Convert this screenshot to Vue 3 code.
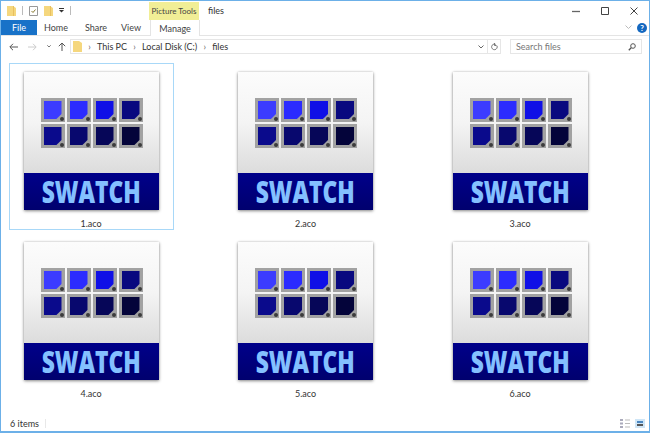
<template>
  <div class="window">
    <header class="title-row">
      <div class="qat">
        <svg class="qat__icon" width="9" height="10" viewBox="0 0 9 10"><path d="M0 0h6l3 2v8H0z" fill="#f5d77e" /><path d="M6.500 0v10" stroke="#e8c060" /></svg>
        <span class="qat__sep"></span>
        <svg class="qat__icon" width="9" height="10" viewBox="0 0 9 10"><path d="M.5.500h8v9h-8z" fill="#fff" stroke="#999" /><path d="M2.500 5l1.500 1.500 2.500-3" fill="none" stroke="#8a7a30" /></svg>
        <svg class="qat__icon" width="9" height="10" viewBox="0 0 9 10"><path d="M0 0h6l3 2v8H0z" fill="#f5d77e" /><path d="M6.500 0v10" stroke="#e8c060" /></svg>
        <svg class="qat__icon" width="5" height="5" viewBox="0 0 5 5"><path d="M0 .5h5" stroke="#333" /><path d="M0 2h5L2.500 4.500z" fill="#333" /></svg>
        <span class="qat__sep"></span>
      </div>
      <div class="context-tab">Picture Tools</div>
      <div class="title">files</div>
      <div class="win-controls">
        <svg width="8" height="8" viewBox="0 0 8 8"><path d="M0 4.500h8" stroke="#666" stroke-width="1.300" /></svg>
        <svg width="8" height="8" viewBox="0 0 8 8"><path d="M.5.500h7v7h-7z" fill="none" stroke="#444" /></svg>
        <svg width="8" height="8" viewBox="0 0 8 8"><path d="M.5.500l7 7M7.500.500l-7 7" stroke="#444" /></svg>
      </div>
    </header>

    <nav class="tabs">
      <span class="tab tab--file">File</span>
      <span class="tab tab--home">Home</span>
      <span class="tab tab--share">Share</span>
      <span class="tab tab--view">View</span>
      <span class="tab tab--manage">Manage</span>
      <svg class="tabs__chevron" width="7" height="5" viewBox="0 0 7 5"><path d="M.5.500l3 3 3-3" fill="none" stroke="#bbb" /></svg>
      <span class="help">?</span>
    </nav>

    <section class="toolbar">
      <div class="nav-buttons">
        <svg width="9" height="8" viewBox="0 0 9 8"><path d="M9 4H1M4 .8L.8 4 4 7.200" fill="none" stroke="#555" /></svg>
        <svg width="9" height="8" viewBox="0 0 9 8"><path d="M0 4h8M5 .8L8.200 4 5 7.200" fill="none" stroke="#ccc" /></svg>
        <svg width="4" height="3" viewBox="0 0 4 3"><path d="M.3.300L2 2l1.700-1.700" fill="none" stroke="#777" /></svg>
        <svg class="nav-up" width="8" height="9" viewBox="0 0 8 9"><path d="M4 9V1M.8 4.200L4 1l3.200 3.200" fill="none" stroke="#555" /></svg>
      </div>
      <div class="address">
        <svg class="address__folder" width="9" height="11" viewBox="0 0 9 11"><path d="M0 0h6l3 2v9H0z" fill="#f5d77e" /></svg>
        <span class="crumb-sep">›</span>
        <span>This PC</span>
        <span class="crumb-sep">›</span>
        <span>Local Disk (C:)</span>
        <span class="crumb-sep">›</span>
        <span>files</span>
        <span class="address__end">
          <svg width="6" height="4" viewBox="0 0 6 4"><path d="M.5.500L3 3 5.500.500" fill="none" stroke="#666" /></svg>
          <span class="address__divider"></span>
          <svg width="7" height="8" viewBox="0 0 7 8"><path d="M6 2.800a2.800 2.800 0 1 1-1.300-1.400M3.500 0v2.500h2" fill="none" stroke="#777" /></svg>
        </span>
      </div>
      <div class="search">
        <span>Search files</span>
        <svg width="8" height="8" viewBox="0 0 8 8"><circle cx="5" cy="3" r="2.300" fill="none" stroke="#555" /><path d="M3.200 4.800L.8 7.200" stroke="#555" stroke-width="1.300" /></svg>
      </div>
    </section>

    <main class="files">
      <article v-for="(file, i) in files" :key="file" class="tile" :class="{ 'tile--focus': i === 0 }">
        <div class="doc">
          <div class="doc__body">
            <div class="swatches">
              <span v-for="c in colors" :key="c" class="swatch">
                <span class="swatch__fill" :style="{ background: c }"></span>
                <span class="swatch__dot"></span>
              </span>
            </div>
          </div>
          <div class="doc__band"><span class="doc__word">SWATCH</span></div>
        </div>
        <div class="tile__name">{{ file }}</div>
      </article>
    </main>

    <footer class="status">
      <span class="status__count">6 items</span>
      <span class="status__sep"></span>
      <span class="status__views">
        <svg width="11" height="9" viewBox="0 0 11 9"><path d="M0 1h3M0 4.500h3M0 8h3" stroke="#aab" stroke-width="2" /><path d="M5 1h5M5 4.500h5M5 8h5" stroke="#bbb" /></svg>
        <svg width="10" height="9" viewBox="0 0 10 9"><path d="M0 0h10v9H0z" fill="#cfe6f7" /><path d="M2 2h6v2H2z" fill="#4a86c0" /><path d="M2 5h6v2H2z" fill="#555" /></svg>
      </span>
    </footer>
  </div>
</template>

<script setup>
const files = ['1.aco', '2.aco', '3.aco', '4.aco', '5.aco', '6.aco']

const colors = ['#3c3cff', '#2b2bff', '#0f0fe6', '#08087f', '#0a0a8c', '#08086e', '#060658', '#04043a']
</script>

<style>
html,
body {
  margin: 0;
  background: #fff;
}
</style>

<style scoped>
.window {
  width: 650px;
  height: 433px;
  box-sizing: border-box;
  display: flex;
  flex-direction: column;
  overflow: hidden;
  border-top: 1px solid #6cb0e8;
  border-bottom: 2px solid #6cb0e8;
  border-left: 1px solid #6cb0e8;
  border-right: 1px solid #6cb0e8;
  background: #fff;
  color: #222;
  font-family: Lato, "Open Sans", sans-serif;
  font-size: 9px;
}

.title-row {
  height: 19px;
  display: flex;
  align-items: flex-start;
  flex-shrink: 0;
}

.qat {
  width: 148px;
  height: 19px;
  display: flex;
  align-items: center;
  padding-left: 6px;
  box-sizing: border-box;
}

.qat__icon {
  margin-right: 6px;
}

.qat__sep {
  width: 1px;
  height: 9px;
  margin-right: 6px;
  background: #bbb;
}

.context-tab {
  width: 50px;
  height: 18px;
  margin-top: 1px;
  display: flex;
  align-items: center;
  justify-content: center;
  background: #f1ee96;
  color: #444;
  font-size: 8px;
  white-space: nowrap;
}

.title {
  margin-left: 9px;
  line-height: 19px;
  color: #333;
}

.win-controls {
  margin-left: auto;
  height: 19px;
  display: flex;
  align-items: center;
  gap: 21px;
  padding-right: 11px;
}

.tabs {
  height: 16px;
  box-sizing: border-box;
  display: flex;
  align-items: stretch;
  flex-shrink: 0;
  border-bottom: 1px solid #e4e4e4;
}

.tab {
  display: flex;
  align-items: center;
  justify-content: center;
  color: #444;
}

.tab--file {
  width: 36px;
  background: #1872c8;
  color: #fff;
}

.tab--home {
  margin-left: 9px;
  width: 20px;
}

.tab--share {
  margin-left: 18px;
  width: 24px;
}

.tab--view {
  margin-left: 14px;
  width: 18px;
}

.tab--manage {
  margin-left: 10px;
  width: 50px;
  height: 16px;
  box-sizing: border-box;
  background: #fff;
  border-left: 1px solid #e4e4e4;
  border-right: 1px solid #e4e4e4;
}

.tabs__chevron {
  margin-left: auto;
  align-self: center;
  margin-right: 5px;
}

.help {
  width: 10px;
  height: 10px;
  margin-right: 2px;
  align-self: center;
  border-radius: 50%;
  background: #1468c0;
  color: #fff;
  font-size: 8px;
  font-weight: 700;
  line-height: 10px;
  text-align: center;
}

.toolbar {
  height: 21px;
  display: flex;
  align-items: center;
  flex-shrink: 0;
  color: #333;
}

.nav-buttons {
  width: 69px;
  display: flex;
  align-items: center;
  padding-left: 8px;
  box-sizing: border-box;
  gap: 10px;
}

.nav-up {
  margin-left: -3px;
}

.address {
  width: 431px;
  height: 15px;
  box-sizing: border-box;
  display: flex;
  align-items: center;
  padding-left: 2px;
  border: 1px solid #e6e6e6;
}

.crumb-sep {
  width: 15px;
  text-align: center;
  color: #666;
  line-height: 12px;
}

.address__end {
  margin-left: auto;
  display: flex;
  align-items: center;
  height: 100%;
  gap: 3px;
  padding-right: 2px;
}

.address__divider {
  width: 1px;
  height: 100%;
  background: #e6e6e6;
}

.search {
  width: 132px;
  height: 15px;
  margin-left: 9px;
  box-sizing: border-box;
  display: flex;
  align-items: center;
  justify-content: space-between;
  padding: 0 5px 0 5px;
  border: 1px solid #e6e6e6;
  color: #777;
}

.files {
  flex: 1;
  display: grid;
  grid-template-columns: repeat(3, 165px);
  grid-auto-rows: 167px;
  column-gap: 49.500px;
  row-gap: 3px;
  align-content: start;
  padding: 6px 0 0 8px;
}

.tile {
  box-sizing: border-box;
  border: 1px solid transparent;
  padding: 8px 14px 0 13px;
  display: flex;
  flex-direction: column;
  align-items: center;
}

.tile--focus {
  border-color: #a8d8f8;
}

.doc {
  width: 135px;
  height: 138px;
  flex-shrink: 0;
  display: flex;
  flex-direction: column;
  box-shadow: 0 1px 3px rgba(0, 0, 0, 0.45), 0 0 2px rgba(0, 0, 0, 0.12);
}

.doc__body {
  flex: 1;
  padding: 26px 0 0 17px;
  background: linear-gradient(#fcfcfc, #f4f4f4 50%, #dcdcdc);
}

.swatches {
  display: grid;
  grid-template-columns: repeat(4, 24px);
  gap: 2px;
}

.swatch {
  position: relative;
  width: 24px;
  height: 24px;
  box-sizing: border-box;
  padding: 3px;
  background: #a2a2a2;
}

.swatch__fill {
  display: block;
  width: 18px;
  height: 18px;
  clip-path: polygon(0 0, 100% 0, 100% 72%, 72% 100%, 0 100%);
}

.swatch__dot {
  position: absolute;
  right: 1px;
  bottom: 1px;
  width: 4px;
  height: 4px;
  border-radius: 50%;
  background: #3c3c3c;
}

.doc__band {
  height: 37px;
  display: flex;
  align-items: center;
  justify-content: center;
  background: linear-gradient(#00008a, #00006e);
}

.doc__word {
  display: block;
  color: #84c0ff;
  font-family: "Open Sans", sans-serif;
  font-size: 30px;
  font-weight: 800;
  line-height: 37px;
  transform: scaleX(0.76);
}

.tile__name {
  margin-top: 8px;
  color: #333;
  line-height: 12px;
}

.status {
  height: 15px;
  display: flex;
  align-items: center;
  flex-shrink: 0;
  padding-left: 9px;
  color: #333;
}

.status__sep {
  width: 1px;
  height: 9px;
  margin-left: 6px;
  background: #e8e8e8;
}

.status__views {
  margin-left: auto;
  display: flex;
  align-items: center;
  gap: 4px;
  padding-right: 4px;
}
</style>
